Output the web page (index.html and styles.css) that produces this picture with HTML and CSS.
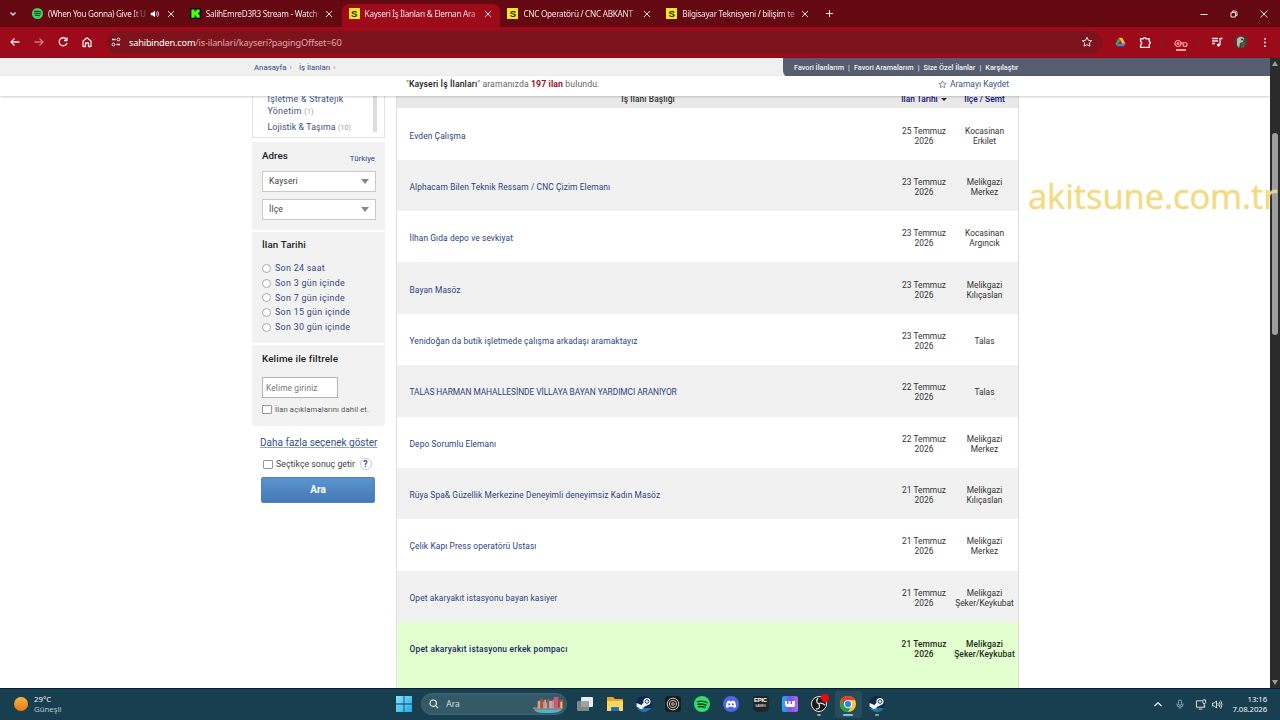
FILE: index.html
```html
<!DOCTYPE html>
<html lang="tr">
<head>
    <meta charset="UTF-8">
    <title>Kayseri İş İlanları &amp; Eleman Arayanlar</title>
    <link rel="stylesheet" href="styles.css">
</head>
<body>
    <!-- sekmeler -->
    <div class="tabs">
        <div class="tab-search"><svg width="8" height="8" viewBox="0 0 8 8"><path d="M1.500 2.500 4 5 6.500 2.500" class="line thick"/></svg></div>
        <div class="tab tab-first">
            <svg class="fav" viewBox="0 0 24 24"><circle cx="12" cy="12" r="12" fill="#3bd565"/><path d="M5 8q8-2 14 1M6 12q7-2 12 1M7 16q5-1 9 1" fill="none" stroke="#132b1b" stroke-width="2.2" stroke-linecap="round"/></svg>
            <span class="tab-title t1">(When You Gonna) Give It U</span>
            <svg class="sound" viewBox="0 0 12 12"><path d="M1 4.500h2L6 2v8L3 7.500H1z" fill="#fff"/><path d="M7.500 4q1.500 2 0 4M9 2.500q3 3.500 0 7" class="line"/></svg>
            <span class="x"></span>
        </div>
        <div class="tab">
            <svg class="fav" viewBox="0 0 24 24"><path fill="#07130a" d="M0 0h24v24H0z"/><path fill="#53fc18" d="M3 3h7v5h2V5h3V3h6v7h-3v4h3v7h-6v-2h-3v-3h-2v5H3z"/></svg>
            <span class="tab-title">SalihEmreD3R3 Stream - Watch</span>
            <span class="x"></span>
        </div>
        <div class="tab active">
            <span class="fav s">S</span>
            <span class="tab-title">Kayseri İş İlanları &amp; Eleman Ara</span>
            <span class="x"></span>
        </div>
        <div class="tab">
            <span class="fav s">S</span>
            <span class="tab-title">CNC Operatörü / CNC ABKANT</span>
            <span class="x"></span>
        </div>
        <div class="tab">
            <span class="fav s">S</span>
            <span class="tab-title">Bilgisayar Teknisyeni / bilişim te</span>
            <span class="x"></span>
        </div>
        <svg class="plus" width="9" height="9" viewBox="0 0 9 9"><path d="M4.500 1v7M1 4.500h7" class="line"/></svg>
        <div class="window-buttons">
            <svg width="10" height="10" viewBox="0 0 10 10"><path d="M1.500 5.500h7" class="line"/></svg>
            <svg width="10" height="10" viewBox="0 0 10 10"><path d="M2 3.500h4.500V8H2zM3.500 3V2h3q1.500 0 1.500 1.500v3H7" class="line"/></svg>
            <svg width="10" height="10" viewBox="0 0 10 10"><path d="m1.500 1.500 7 7m0-7-7 7" class="line"/></svg>
        </div>
    </div>

    <!-- adres çubuğu -->
    <div class="toolbar">
        <div class="nav">
            <svg viewBox="0 0 12 12"><path d="M10.500 6H2m3.500-3.500L2 6l3.500 3.500" class="line thick"/></svg>
            <svg class="dim" viewBox="0 0 12 12"><path d="M1.500 6H10M6.500 2.500 10 6 6.500 9.500" class="line thick"/></svg>
            <svg viewBox="0 0 12 12"><path d="M9.500 3.500A4 4 0 1 0 10 7M10 1.500V4.500H7" class="line thick"/></svg>
            <svg viewBox="0 0 12 12"><path d="M2 5 6 1.800 10 5v5.500H7.500V7h-3v3.500H2z" class="line thick"/></svg>
        </div>
        <div class="omnibox">
            <svg class="tune" viewBox="0 0 12 12"><path d="M2 3.500h3.500M6.500 8.500H10" class="line thick"/><circle cx="8.500" cy="3.500" r="1.400" class="line"/><circle cx="3.500" cy="8.500" r="1.400" class="line"/></svg>
            <span class="url"><b>sahibinden.com</b>/is-ilanlari/kayseri?pagingOffset=60</span>
            <svg class="star" viewBox="0 0 12 12"><path d="m6 1.300 1.400 3 3.300.4-2.400 2.200.6 3.300L6 8.600l-2.900 1.600.6-3.300-2.400-2.200 3.300-.4z" class="line"/></svg>
        </div>
        <div class="ext">
            <svg class="drive" viewBox="0 0 12 12"><path d="M4 1h4l4 7H8z" fill="#fbc02d"/><path d="M4 1 0 8l2 3 4-7z" fill="#34a853"/><path d="M2 11h8l2-3H4z" fill="#4285f4"/></svg>
            <svg class="puzzle" viewBox="0 0 12 12"><path d="M1.500 2.500H4q1-2 2.500 0h3V5q2 1 0 2.500v3h-8V8q2-1.500 0-3z" class="line thick"/></svg>
            <i class="sep"></i>
            <span class="keys"><svg viewBox="0 0 14 9"><circle cx="4" cy="4.500" r="3" class="pk"/><circle cx="4" cy="4.500" r="1" class="pk"/><path d="M7 4h3" class="pk"/><circle cx="11" cy="5.500" r="2" class="pk"/></svg></span>
            <i class="sep"></i>
            <svg class="music" viewBox="0 0 12 12"><path d="M1 2.500h6M1 5h6M1 7.500h3M9 9V2.500h2.500" class="line thick"/><circle cx="7.500" cy="9" r="1.600" fill="#fff"/></svg>
            <svg class="avatar" viewBox="0 0 14 14"><circle cx="7" cy="7" r="6.500" fill="#3b4438"/><path d="M3 4q3-4 7-1l-1 4-3 1-1 5-2-3z" fill="#b9b9a8"/><path d="M8 8l4-1-2 5-3 1z" fill="#6e5046"/><circle cx="8" cy="4.500" r="1" fill="#222"/></svg>
            <svg class="dots" viewBox="0 0 4 12"><circle cx="2" cy="2" r="1"/><circle cx="2" cy="6" r="1"/><circle cx="2" cy="10" r="1"/></svg>
        </div>
    </div>

    <div class="viewport">
        <div class="page">
            <div class="crumbs">
                <span class="crumb-links"><a>Anasayfa</a><i>›</i><a class="c2">İş İlanları</a><i>›</i></span>
                <div class="quick"><span>Favori İlanlarım</span><em>|</em><span>Favori Aramalarım</span><em>|</em><span>Size Özel İlanlar</span><em>|</em><span>Karşılaştır</span></div>
            </div>
            <div class="result-bar">
                <span class="result">"<b>Kayseri İş İlanları</b>" aramanızda <b class="red">197 ilan</b> bulundu.</span>
                <a class="save"><svg viewBox="0 0 12 12"><path d="m6 1 1.400 3.300 3.600.3-2.700 2.300.8 3.500L6 8.500l-3.100 1.900.8-3.500L1 4.600l3.600-.3z"/></svg>Aramayı Kaydet</a>
            </div>

            <div class="content">
                <div class="sidebar">
                    <div class="categories">
                        <div class="cat-list">
                            <a>İşletme &amp; Stratejik<br>Yönetim <small>(1)</small></a>
                            <a class="cat2">Lojistik &amp; Taşıma <small>(10)</small></a>
                        </div>
                        <div class="cat-scroll"></div>
                    </div>
                    <div class="panel address">
                        <div class="panel-head"><h3>Adres</h3><a>Türkiye</a></div>
                        <div class="select">Kayseri<i></i></div>
                        <div class="select">İlçe<i></i></div>
                    </div>
                    <div class="panel dates">
                        <h3>İlan Tarihi</h3>
                        <label><i></i>Son 24 saat</label>
                        <label><i></i>Son 3 gün içinde</label>
                        <label><i></i>Son 7 gün içinde</label>
                        <label><i></i>Son 15 gün içinde</label>
                        <label><i></i>Son 30 gün içinde</label>
                    </div>
                    <div class="panel keyword">
                        <h3>Kelime ile filtrele</h3>
                        <div class="input">Kelime giriniz</div>
                        <div class="check"><i></i>İlan açıklamalarını dahil et.</div>
                    </div>
                    <a class="more">Daha fazla seçenek göster</a>
                    <div class="auto"><i></i>Seçtikçe sonuç getir<span>?</span></div>
                    <div class="search-btn">Ara</div>
                </div>

                <div class="listing">
                    <div class="row head"><span>İş İlanı Başlığı</span><span>İlan Tarihi <i></i></span><span>İlçe / Semt</span></div>
                    <div class="row"><a>Evden Çalışma</a><span>25 Temmuz<br>2026</span><span>Kocasinan<br>Erkilet</span></div>
                    <div class="row"><a>Alphacam Bilen Teknik Ressam / CNC Çizim Elemanı</a><span>23 Temmuz<br>2026</span><span>Melikgazi<br>Merkez</span></div>
                    <div class="row"><a>İlhan Gıda depo ve sevkiyat</a><span>23 Temmuz<br>2026</span><span>Kocasinan<br>Argıncık</span></div>
                    <div class="row"><a>Bayan Masöz</a><span>23 Temmuz<br>2026</span><span>Melikgazi<br>Kılıçaslan</span></div>
                    <div class="row"><a>Yenidoğan da butik işletmede çalışma arkadaşı aramaktayız</a><span>23 Temmuz<br>2026</span><span>Talas</span></div>
                    <div class="row"><a class="caps">TALAS HARMAN MAHALLESİNDE VİLLAYA BAYAN YARDIMCI ARANIYOR</a><span>22 Temmuz<br>2026</span><span>Talas</span></div>
                    <div class="row"><a>Depo Sorumlu Elemanı</a><span>22 Temmuz<br>2026</span><span>Melikgazi<br>Merkez</span></div>
                    <div class="row"><a>Rüya Spa&amp; Güzellik Merkezine Deneyimli deneyimsiz Kadın Masöz</a><span>21 Temmuz<br>2026</span><span>Melikgazi<br>Kılıçaslan</span></div>
                    <div class="row"><a>Çelik Kapı Press operatörü Ustası</a><span>21 Temmuz<br>2026</span><span>Melikgazi<br>Merkez</span></div>
                    <div class="row"><a>Opet akaryakıt istasyonu bayan kasiyer</a><span>21 Temmuz<br>2026</span><span>Melikgazi<br>Şeker/Keykubat</span></div>
                    <div class="row promo"><a>Opet akaryakıt istasyonu erkek pompacı</a><span>21 Temmuz<br>2026</span><span>Melikgazi<br>Şeker/Keykubat</span></div>
                    <div class="row promo"></div>
                </div>
            </div>
        </div>
        <div class="scrollbar"><i class="up"></i><div class="thumb"></div><i class="down"></i></div>
    </div>

    <!-- görev çubuğu -->
    <div class="taskbar">
        <div class="weather"><i></i><span>29°C<br><em>Güneşli</em></span></div>
        <div class="apps">
            <svg class="app" viewBox="0 0 16 16"><defs><linearGradient id="win" x2="1" y2="1"><stop stop-color="#7fe3fb"/><stop offset="1" stop-color="#25abec"/></linearGradient></defs><path fill="url(#win)" d="M0 0h7.600v7.600H0zM8.400 0H16v7.600H8.400zM0 8.400h7.600V16H0zM8.400 8.400H16V16H8.400z"/></svg>
            <div class="task-search">
                <svg class="lens" viewBox="0 0 12 12"><circle cx="5" cy="5" r="3.800"/><path d="m8 8 3 3"/></svg>
                <span>Ara</span>
                <svg class="books" viewBox="0 0 34 18"><path fill="#47b9cb" d="M1 14h30q-4 4-11 4h-9q-8 0-10-4z"/><path fill="#b9766a" d="M0 12h32v2H0z"/><path fill="#d8a08d" d="M5 5h3v8H5zM12 4h2v9h-2zM18 5h3v8h-3z"/><path fill="#ad4e54" d="M8 3h3v10H8zM15 3h2v10h-2zM28 4h4v9h-4z"/><path fill="#d7556a" d="M22 1h5v12h-5z"/><path fill="#f0c06a" d="M29 6h2v7h-2zM11 6h1v7h-1z"/><path fill="#8fc0d0" d="M17 5h1v8h-1zM14 7h1v6h-1zM21 4h1v9h-1z"/></svg>
            </div>
            <svg class="app" viewBox="0 0 16 16"><rect x="4" y="1" width="12" height="10" rx="1" fill="#e9edef"/><rect y="5" width="12" height="10" rx="1" fill="#909698" opacity=".85"/></svg>
            <svg class="app" viewBox="0 0 16 16"><path fill="#e7a52b" d="M0 1h6l2 2h8v12H0z"/><path fill="#ffd65c" d="M0 5h16v10H0z"/><path fill="#2370b8" d="M4 15v-3q0-1 1-1h6q1 0 1 1v3z"/></svg>
            <svg class="app" viewBox="0 0 16 16"><use href="#steam"/></svg>
            <svg class="app" viewBox="0 0 16 16"><rect width="16" height="16" rx="3" fill="#1c1d1d"/><g fill="none" stroke="#c9c4b8"><circle cx="8" cy="8" r="5.800"/><circle cx="8" cy="8" r="3.600"/><circle cx="8" cy="8" r="1.300"/></g></svg>
            <svg class="app" viewBox="0 0 16 16"><circle cx="8" cy="8" r="8" fill="#35dc67"/><path d="M3.500 5.600q5-1.400 9.500 1M4 8.300q4-1 8 .9M4.500 10.700q3-.8 6.500.8" fill="none" stroke="#123b20" stroke-width="1.400" stroke-linecap="round"/></svg>
            <svg class="app" viewBox="0 0 16 16"><circle cx="8" cy="8" r="8" fill="#5464e2"/><path fill="#fff" d="M3 11q0-4 1.500-6l2-.6.5.8h2l.5-.8 2 .6Q13 7 13 11l-2 1-.8-1.200H5.800L5 12z"/><circle cx="6.200" cy="8.300" r="1.100" fill="#5464e2"/><circle cx="9.800" cy="8.300" r="1.100" fill="#5464e2"/></svg>
            <span class="app epic"><b>EPIC</b><small>GAMES</small></span>
            <svg class="app" viewBox="0 0 16 16"><defs><linearGradient id="wp" x2="1"><stop stop-color="#29a9ee"/><stop offset=".5" stop-color="#7654e8"/><stop offset="1" stop-color="#b967f2"/></linearGradient></defs><rect width="16" height="16" rx="2.500" fill="url(#wp)"/><path fill="#fff" d="M3 5h2v3h1.500V5h2v3H10V5h3v4q0 2-2 2H6Q3 11 3 8z"/></svg>
            <span class="app running"><svg viewBox="0 0 16 16"><circle cx="8" cy="8" r="7.500" fill="#17191b" stroke="#e2e4e4"/><g fill="none" stroke="#ddd" stroke-width="1.300"><path d="M7 2q-3 4 1 6M14 9q-4-3-6-1M5 13q5 0 3-5"/></g><circle cx="14" cy="2" r="4" fill="#f10606"/></svg></span>
            <span class="chrome-tile"><span class="app running current"><svg viewBox="0 0 16 16"><circle cx="8" cy="8" r="8" fill="#fcc934"/><path fill="#e53c30" d="M1.100 4A8 8 0 0 1 15 4H8a4 4 0 0 0-3.500 6z"/><path fill="#23a050" d="M1.100 4A8 8 0 0 0 8 16l3.500-6a4 4 0 0 1-7 0z"/><circle cx="8" cy="8" r="4" fill="#fff"/><circle cx="8" cy="8" r="3.100" fill="#347fe5"/></svg></span></span>
            <span class="app running"><svg viewBox="0 0 16 16"><g id="steam"><circle cx="8" cy="8" r="8" fill="#102849"/><path fill="#2473a4" d="M1 12h14a8 8 0 0 1-14 0z"/><circle cx="11" cy="5.500" r="3.600" fill="#f1f5f8"/><path fill="#f1f5f8" d="m.5 7 5 2L8 6l4 3-4 2a3 3 0 0 1-5 1L.5 10.500z"/><circle cx="11" cy="5.500" r="1.800" fill="none" stroke="#244367"/></g></svg></span>
        </div>
        <div class="tray">
            <svg class="up" viewBox="0 0 10 10"><path d="M1.500 6.500 5 3.200l3.500 3.300" class="line thick"/></svg>
            <svg class="mic" viewBox="0 0 10 12"><path d="M5 1q1.700 0 1.700 2v2Q6.700 7 5 7T3.300 5V3Q3.300 1 5 1zM1.500 5q0 4 3.500 4t3.500-4M5 9v2"/></svg>
            <svg class="net" viewBox="0 0 12 12"><path d="M7 2H1v7h9V7M3.500 11h4M8 1h3v3q0 1-1.500 1T8 4zM9.500 5v4" class="line"/></svg>
            <svg class="vol" viewBox="0 0 12 12"><path d="M1 4.500h2L5.500 2v8L3 7.500H1zM7 4.500q1 1.500 0 3M8.500 3q2 3 0 6M10 1.500q3 4.500 0 9" class="line"/></svg>
            <span class="clock">13:16<br>7.08.2026</span>
        </div>
    </div>

    <div class="watermark">akitsune.com.tr</div>
</body>
</html>
```
FILE: styles.css
```css
* {
    box-sizing: border-box;
}
body {
    margin: 0;
    width: 1280px;
    height: 720px;
    overflow: hidden;
    position: relative;
    display: flex;
    flex-direction: column;
    background: #fff;
    font-family: Roboto, "Liberation Sans", sans-serif;
    font-size: 8.4px;
    color: #333;
}
i, em {
    font-style: normal;
}
svg {
    display: block;
    flex: none;
}
.line {
    fill: none;
    stroke: #f3e5e6;
    stroke-width: 1;
    stroke-linejoin: round;
}
.thick {
    stroke-width: 1.3;
}

/* tabs */
.tabs {
    height: 27px;
    flex: none;
    display: flex;
    align-items: center;
    background: #640812;
    color: #f4e6e7;
    font-family: "Noto Sans", sans-serif;
    font-size: 8.2px;
}
.tab-search {
    width: 24px;
    padding-left: 9px;
}
.tab {
    width: 158.800px;
    height: 23px;
    margin-top: 4px;
    padding: 0 9.500px 4px 7px;
    display: flex;
    align-items: center;
}
.tab-first {
    padding-left: 8px;
    padding-right: 12px;
}
.tab.active {
    background: #9d0b1a;
    border-radius: 7px 7px 0 0;
}
.fav {
    width: 11px;
    height: 11px;
    flex: none;
}
.fav.s {
    background: #f7e81e;
    color: #222;
    font: bold 9.5px/11px "Liberation Sans", sans-serif;
    text-align: center;
}
.tab-title {
    flex: 1;
    margin-left: 5px;
    white-space: nowrap;
    letter-spacing: -.28px;
    mask-image: linear-gradient(90deg, #000 84%, rgba(0, 0, 0, .3) 97%);
}
.tab-title.t1 {
    margin-right: 4px;
    letter-spacing: -.33px;
}
.sound {
    width: 10px;
    height: 10px;
    margin-right: 8px;
}
.x {
    width: 6px;
    height: 6px;
    flex: none;
    background: linear-gradient(45deg, transparent 44%, #f3e5e6 44%, #f3e5e6 56%, transparent 56%), linear-gradient(-45deg, transparent 44%, #f3e5e6 44%, #f3e5e6 56%, transparent 56%);
}
.plus {
    margin-left: 7px;
}
.window-buttons {
    margin-left: auto;
    margin-right: 11px;
    display: flex;
    gap: 20px;
}

/* toolbar */
.toolbar {
    height: 31px;
    flex: none;
    display: flex;
    align-items: center;
    background: #9d0b1a;
    border-bottom: 1px solid #8d0c18;
}
.nav {
    width: 107px;
    padding-left: 9px;
    display: flex;
    gap: 12px;
}
.nav svg {
    width: 12px;
    height: 12px;
}
.nav .dim {
    opacity: .5;
}
.omnibox {
    width: 995px;
    height: 23px;
    border-radius: 12px;
    background: #7c121b;
    display: flex;
    align-items: center;
    padding: 0 9px 0 3px;
    font-family: "Noto Sans", sans-serif;
    font-size: 9.2px;
    letter-spacing: -.18px;
    color: #dfa9ac;
}
.tune {
    width: 12px;
    height: 12px;
}
.url {
    margin-left: 7px;
}
.url b {
    font-weight: 400;
    color: #fff;
}
.star {
    width: 12px;
    height: 12px;
    margin-left: auto;
}
.ext {
    flex: 1;
    display: flex;
    align-items: center;
    padding-left: 13px;
}
.drive {
    width: 11px;
    height: 10px;
}
.puzzle {
    width: 13px;
    height: 13px;
    margin: 0 10px 0 13px;
}
.sep {
    width: 1px;
    height: 11px;
    background: #75202a;
}
.keys {
    width: 14px;
    margin: 6px 10px 0 11px;
    background: linear-gradient(#ff9a9d, #ff9a9d) 50% 100% / 10px 2px no-repeat;
    padding-bottom: 3px;
}
.keys svg {
    width: 14px;
    height: 9px;
}
.pk {
    fill: none;
    stroke: #ff9a9d;
    stroke-width: 1.2;
}
.music {
    width: 12px;
    height: 12px;
    margin-left: 12px;
}
.avatar {
    width: 14px;
    height: 14px;
    margin-left: 11px;
}
.dots {
    width: 4px;
    height: 11px;
    margin-left: 15px;
    fill: #fff;
}

/* page */
.viewport {
    height: 630px;
    flex: none;
    display: flex;
}
.page {
    width: 1270px;
    height: 630px;
    overflow: hidden;
}
.crumbs {
    height: 18px;
    background: #f0f0f0;
    display: flex;
    align-items: center;
}
.crumb-links {
    width: 783px;
    padding-left: 254px;
    font-size: 7.8px;
    color: #34467f;
}
.crumb-links i {
    margin: 0 0 0 3px;
    color: #888;
}
.crumb-links .c2 {
    margin-left: 7px;
}
.quick {
    flex: 1;
    height: 19px;
    margin-top: 1px;
    padding-left: 11px;
    display: flex;
    align-items: center;
    background: #555d6f;
    border-radius: 0 0 0 6px;
    color: #f2f3f5;
    font-size: 7.3px;
    font-weight: 500;
    letter-spacing: -.02px;
}
.quick em {
    width: 10px;
    text-align: center;
    font-weight: 400;
}
.result-bar {
    height: 19.500px;
    position: relative;
    display: flex;
    align-items: center;
    padding-bottom: 3px;
    padding-left: 406px;
    background: #fff;
    box-shadow: 0 1px 2px rgba(0, 0, 0, .2);
    z-index: 2;
    font-size: 8.7px;
    color: #666;
}
.result {
    width: 532px;
    white-space: nowrap;
    letter-spacing: .1px;
}
.result b {
    font-weight: 500;
    color: #222;
}
.result .red {
    font-weight: 700;
    color: #98142a;
}
.save {
    display: flex;
    align-items: center;
    color: #40557f;
    font-size: 8.500px;
}
.save svg {
    width: 9px;
    height: 9px;
    margin-right: 3px;
    fill: none;
    stroke: #66718a;
}
.content {
    height: 592.500px;
    overflow: hidden;
    display: flex;
    padding-left: 252px;
}

/* sidebar */
.sidebar {
    width: 133px;
    margin-right: 11px;
}
.categories {
    height: 42px;
    display: flex;
    justify-content: space-between;
    border: 1px solid #e3e3e3;
    border-top: 0;
    padding: 0 7px 0 14.500px;
}
.cat-list {
    margin-top: -3px;
    line-height: 12.500px;
    font-size: 8.8px;
    letter-spacing: .28px;
    color: #3c4f86;
    white-space: nowrap;
}
.cat-list a {
    display: block;
}
.cat-list .cat2 {
    margin-top: 2px;
    letter-spacing: .1px;
}
.cat-list small {
    font-size: 7px;
    color: #999;
}
.cat-scroll {
    width: 4px;
    height: 36px;
    background: #dcdcdc;
}
.panel {
    background: #f2f2f2;
    padding: 0 10px;
}
.panel h3 {
    margin: 0;
    font-size: 9.8px;
    line-height: 12px;
    font-weight: 500;
    color: #222;
}
.address {
    margin-top: 4.500px;
    height: 88px;
    padding-top: 8px;
}
.panel-head {
    display: flex;
    justify-content: space-between;
    margin-bottom: 8.500px;
}
.panel-head a {
    font-size: 7.9px;
    line-height: 17px;
    height: 12px;
    color: #34467f;
}
.select {
    height: 21px;
    width: 114px;
    margin-bottom: 7px;
    padding: 0 6px;
    display: flex;
    align-items: center;
    justify-content: space-between;
    background: #fff;
    border: 1px solid #c9c9c9;
    font-size: 8.6px;
    letter-spacing: .1px;
    color: #444;
}
.select i {
    border: 4px solid transparent;
    border-top: 5px solid #888;
    border-bottom: 0;
}
.dates {
    margin-top: 1.500px;
    height: 111.500px;
    padding-top: 7.500px;
}
.dates h3 {
    margin-bottom: 10px;
    letter-spacing: .1px;
}
.dates label {
    height: 14.700px;
    display: flex;
    align-items: center;
    font-size: 8.9px;
    letter-spacing: .3px;
    color: #34467f;
}
.dates label i {
    width: 9px;
    height: 9px;
    margin-right: 4px;
    border: 1px solid #aaa;
    border-radius: 50%;
    background: #fff;
}
.keyword {
    margin-top: 2px;
    height: 81px;
    padding-top: 7.500px;
    border-radius: 0 0 3px 3px;
}
.keyword h3 {
    letter-spacing: .15px;
}
.input {
    width: 76px;
    height: 21px;
    margin-top: 12px;
    padding-left: 3px;
    line-height: 20px;
    border: 1px solid #b4b4b4;
    background: #fff;
    font-size: 8.4px;
    letter-spacing: .12px;
    color: #777;
}
.check, .auto {
    display: flex;
    align-items: center;
    white-space: nowrap;
}
.check {
    margin-top: 7.500px;
    font-size: 7.6px;
    letter-spacing: .15px;
    color: #555;
}
.check i, .auto i {
    width: 10px;
    height: 9px;
    border: 1px solid #999;
    border-radius: 1px;
    background: #fff;
    margin-right: 3px;
}
.more {
    display: block;
    margin: 10px 0 0 8px;
    line-height: 13px;
    font-size: 10px;
    white-space: nowrap;
    text-decoration: underline;
    text-decoration-color: #8fa0c5;
    color: #34508a;
}
.auto {
    margin: 9px 0 0 11px;
    height: 12px;
    font-size: 8.8px;
    color: #444;
}
.auto span {
    width: 12px;
    height: 12px;
    margin-left: 4.500px;
    border: 1px solid #c6ccd4;
    border-radius: 50%;
    font-weight: 700;
    line-height: 10px;
    text-align: center;
    color: #34508a;
}
.search-btn {
    width: 114px;
    height: 26px;
    margin: 7px 0 0 9px;
    border: 1px solid #5580b2;
    border-radius: 2px;
    background: linear-gradient(#5a94cd, #457ab8);
    color: #fff;
    font-size: 10px;
    font-weight: 700;
    line-height: 24px;
    text-align: center;
}

/* listing */
.listing {
    width: 623px;
    border: 1px solid #dedede;
    border-width: 0 1px;
}
.row {
    height: 51.360px;
    display: grid;
    grid-template-columns: 502px 50px 71px;
    align-items: center;
    line-height: 10px;
    padding-top: 3px;
    text-align: center;
}
.row:nth-child(odd) {
    background: #f1f1f1;
}
.row a {
    text-align: left;
    padding-left: 12.500px;
    color: #2c427f;
    letter-spacing: .1px;
    white-space: nowrap;
}
.row a.caps {
    letter-spacing: -.07px;
}
.row.head {
    height: 12.900px;
    align-items: start;
    padding: 0;
    line-height: 7px;
    background: #e9e9e9;
    font-weight: 500;
    color: #12126f;
}
.row.head span {
    white-space: nowrap;
}
.row.head span:first-child {
    color: #333;
    letter-spacing: .1px;
}
.row.head i {
    display: inline-block;
    vertical-align: 1px;
    margin-left: 1px;
    border: 3px solid transparent;
    border-top: 3px solid #222;
    border-bottom: 0;
}
.row.promo {
    background: #e3ffcf;
    font-weight: 500;
    color: #1c2b18;
}
.row.promo a {
    color: #14275f;
    letter-spacing: .22px;
}
.row.promo span {
    letter-spacing: .1px;
}

.scrollbar {
    width: 10px;
    height: 630px;
    background: #2b2b2b;
    display: flex;
    flex-direction: column;
    align-items: center;
}
.scrollbar i {
    border: 3px solid transparent;
}
.scrollbar .up {
    border-bottom: 5px solid #9c9c9c;
    border-top: 0;
    margin-top: 3px;
}
.thumb {
    width: 6px;
    height: 202px;
    margin-top: 67px;
    background: #9d9d9d;
    border-radius: 3px;
}
.scrollbar .down {
    border-top: 5px solid #9c9c9c;
    border-bottom: 0;
    margin-top: auto;
    margin-bottom: 3px;
}

/* taskbar */
.taskbar {
    height: 32px;
    flex: none;
    display: flex;
    align-items: center;
    padding-bottom: 1px;
    background: #173f50;
    border-top: 1px solid #081b30;
    color: #f2f6f8;
    font-family: "Noto Sans", sans-serif;
    font-size: 7.8px;
    line-height: 10.500px;
}
.weather {
    width: 396px;
    padding-left: 14px;
    display: flex;
    align-items: center;
}
.weather i {
    width: 14px;
    height: 14px;
    margin-right: 6px;
    border-radius: 50%;
    background: linear-gradient(#f9b63a, #ed7419);
}
.weather em {
    color: #b5c7cf;
}
.apps {
    width: 746px;
    display: flex;
    align-items: center;
    gap: 13.200px;
}
.app {
    width: 16px;
    height: 16px;
    flex: none;
    overflow: visible;
}
.running svg {
    width: 16px;
    height: 16px;
    overflow: visible;
}
.running::after {
    content: "";
    display: block;
    width: 4px;
    height: 2px;
    margin: 2px auto 0;
    border-radius: 1px;
    background: #8c9ea6;
}
.running.current::after {
    width: 10px;
    background: #7cc7ea;
}
.task-search {
    width: 146px;
    height: 22px;
    margin-left: -4px;
    margin-right: -3px;
    padding: 0 0 0 7px;
    display: flex;
    align-items: center;
    background: #345a68;
    border: 1px solid #416572;
    border-radius: 11px;
    font-size: 8.6px;
    color: #d3dfe3;
}
.lens {
    width: 10px;
    height: 10px;
    margin-right: 7px;
    fill: none;
    stroke: #fff;
    stroke-width: 1.3;
}
.books {
    width: 34px;
    height: 17px;
    margin-left: auto;
}
.epic {
    display: flex;
    flex-direction: column;
    align-items: center;
    background: #202426;
    border-radius: 2px 2px 5px 5px;
    color: #fff;
    font-family: "Liberation Sans", sans-serif;
}
.epic b {
    font-size: 6px;
    line-height: 9px;
    letter-spacing: -.3px;
}
.epic small {
    font-size: 3px;
    line-height: 3px;
}
.chrome-tile {
    width: 27px;
    height: 27px;
    margin: 0 -5.500px;
    display: grid;
    place-items: center;
    border-radius: 3px;
    background: #294b59;
}
.tray {
    flex: 1;
    display: flex;
    align-items: center;
    padding: 0 13px 0 11px;
}
.tray svg {
    height: 11px;
}
.tray .up {
    width: 10px;
}
.tray .mic {
    width: 10px;
    margin-left: 12px;
    fill: none;
    stroke: #8bb9c6;
}
.tray .net {
    width: 12px;
    margin-left: 10px;
}
.tray .vol {
    width: 12px;
    margin-left: 4px;
}
.clock {
    margin-left: auto;
    text-align: right;
    letter-spacing: -.1px;
}

.watermark {
    position: absolute;
    left: 1028px;
    top: 171px;
    font: 34.700px/50px "Open Sans", sans-serif;
    letter-spacing: -.15px;
    white-space: nowrap;
    color: rgba(246, 218, 104, .85);
    text-shadow: 0 0 2px #e4dfcf;
}
```
